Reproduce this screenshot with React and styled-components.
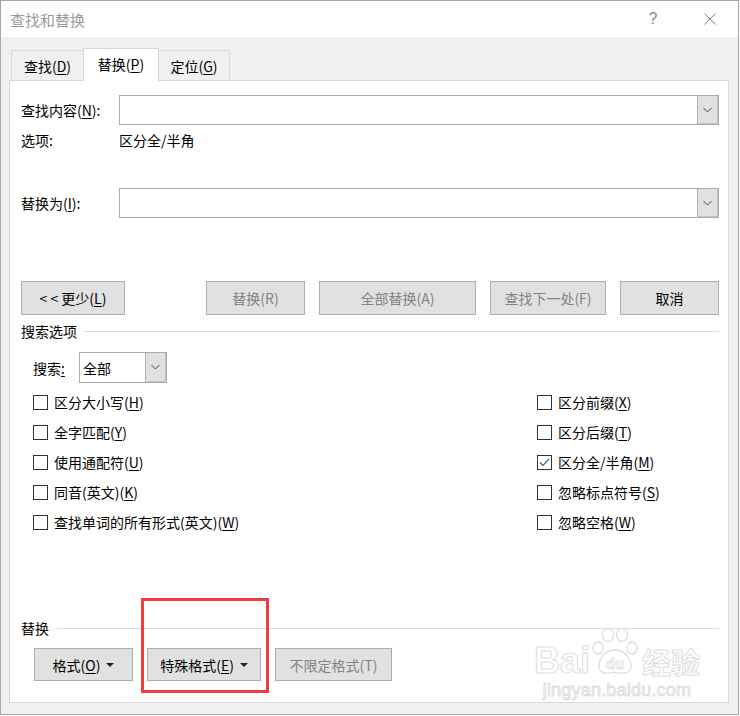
import React from "react";
import styled, { createGlobalStyle } from "styled-components";

const GlobalStyle = createGlobalStyle`
  html, body {
    margin: 0;
    padding: 0;
    background: #ffffff;
  }
  body {
    font-family: "Noto Sans CJK SC", "Noto Sans", sans-serif;
    font-size: 14px;
    color: #000;
  }
`;

const Window = styled.div`
  position: relative;
  width: 739px;
  height: 715px;
  box-sizing: border-box;
  border: 1px solid #a6a6a6;
  background: #f0f0f0;
  display: flex;
  flex-direction: column;
  overflow: hidden;
`;

const TitleBar = styled.div`
  height: 36px;
  flex-shrink: 0;
  background: #ffffff;
  display: flex;
  align-items: center;
  padding-left: 9px;
  font-size: 15px;
  color: #9a9a9a;
`;

const TitleText = styled.div`
  flex: 1;
  line-height: 20px;
  padding-top: 1px;
`;

const TitleControl = styled.div`
  width: ${(p) => p.w}px;
  margin-left: ${(p) => p.ml || 0}px;
  display: flex;
  align-items: center;
  justify-content: center;
  color: #8a8a8a;
  font-size: 16px;
  font-family: "Liberation Sans", sans-serif;
  font-weight: 300;
`;

const Body = styled.div`
  flex: 1;
  display: flex;
  flex-direction: column;
  padding: 11px 9px 11px 8px;
`;

const TabRow = styled.div`
  display: flex;
  align-items: flex-end;
  height: 32px;
  margin-left: 2px;
  position: relative;
  z-index: 1;
`;

const Tab = styled.div`
  width: ${(p) => p.w}px;
  height: ${(p) => (p.active ? 33 : 30)}px;
  margin-bottom: ${(p) => (p.active ? -1 : 0)}px;
  margin-left: -1px;
  box-sizing: border-box;
  border: 1px solid #d9d9d9;
  border-bottom: none;
  background: ${(p) => (p.active ? "#ffffff" : "#f0f0f0")};
  display: flex;
  align-items: center;
  justify-content: center;
  padding-bottom: ${(p) => (p.active ? 2 : 0)}px;
  font-size: 14px;
  line-height: 18px;
  &:first-child {
    margin-left: 0;
  }
`;

const Panel = styled.div`
  flex: 1;
  background: #ffffff;
  border: 1px solid #d9d9d9;
  padding: 0 9px 0 11px;
  display: flex;
  flex-direction: column;
`;

const FieldRow = styled.div`
  display: flex;
  align-items: center;
  margin-top: ${(p) => p.mt}px;
  height: ${(p) => p.h || 30}px;
`;

const FieldLabel = styled.div`
  width: 98px;
  flex-shrink: 0;
  line-height: 18px;
`;

const OptionValue = styled.div`
  line-height: 18px;
`;

const Combo = styled.div`
  flex: 1;
  height: 30px;
  box-sizing: border-box;
  border: 1px solid #ababab;
  background: #fff;
  display: flex;
  justify-content: flex-end;
`;

const DropButton = styled.div`
  width: 21px;
  box-sizing: border-box;
  background: #e1e1e1;
  border-left: 1px solid #adadad;
  border-right: 1px solid #c4c4c4;
  border-bottom: 1px solid #c4c4c4;
  display: flex;
  align-items: center;
  justify-content: center;
`;

const ButtonRow = styled.div`
  display: flex;
  align-items: center;
  gap: 14px;
  margin-top: ${(p) => p.mt}px;
  padding-left: ${(p) => p.pl || 0}px;
`;

const Spacer = styled.div`
  flex: 1;
`;

const Button = styled.div`
  position: relative;
  width: ${(p) => p.w}px;
  height: ${(p) => p.h || 34}px;
  box-sizing: border-box;
  border: 1px solid #adadad;
  background: #e1e1e1;
  color: ${(p) => (p.disabled ? "#838383" : "#000")};
  display: flex;
  align-items: center;
  justify-content: center;
  gap: 6px;
  font-size: 14px;
  line-height: 18px;
  white-space: pre;
`;

const Caret = styled.span`
  width: 0;
  height: 0;
  border-left: 4px solid transparent;
  border-right: 4px solid transparent;
  border-top: 4px solid #222;
  margin-top: 1px;
`;

const Key = styled.u`
  text-underline-offset: 2px;
  text-decoration-thickness: 1px;
`;

const SectionHeader = styled.div`
  display: flex;
  align-items: center;
  gap: 8px;
  height: 18px;
  margin-top: ${(p) => p.mt}px;
  line-height: 18px;
`;

const Rule = styled.div`
  flex: 1;
  height: 1px;
  background: #dcdcdc;
  margin-top: 1px;
`;

const SearchRow = styled.div`
  display: flex;
  align-items: center;
  margin-top: 12px;
  padding-left: 12px;
`;

const SearchLabel = styled.div`
  width: 46px;
  line-height: 18px;
`;

const Select = styled.div`
  width: 88px;
  height: 31px;
  box-sizing: border-box;
  border: 1px solid #ababab;
  display: flex;
  background: #fff;
`;

const SelectValue = styled.div`
  flex: 1;
  display: flex;
  align-items: center;
  padding-left: 3px;
  line-height: 18px;
`;

const CheckGrid = styled.div`
  display: grid;
  grid-template-columns: 504px 1fr;
  grid-template-rows: repeat(5, 30px);
  grid-auto-flow: column;
  margin-top: 4px;
  padding-left: 12px;
`;

const CheckItem = styled.div`
  display: flex;
  align-items: center;
  gap: 6px;
  line-height: 18px;
`;

const Box = styled.div`
  width: 15px;
  height: 15px;
  box-sizing: border-box;
  border: 1px solid #333;
  background: #fff;
  display: flex;
  align-items: center;
  justify-content: center;
`;

const Highlight = styled.div`
  position: absolute;
  left: -7px;
  right: -9px;
  top: -51px;
  bottom: -13px;
  border: 3px solid #f23b3d;
  pointer-events: none;
`;

const Watermark = styled.div`
  position: absolute;
  right: 38px;
  bottom: 15px;
  display: flex;
  flex-direction: column;
  align-items: center;
  color: #ffffff;
  font-family: "Liberation Sans", "Noto Sans CJK SC", sans-serif;
  -webkit-text-stroke: 1px #dedede;
`;

const MarkTop = styled.div`
  display: flex;
  align-items: flex-end;
  font-size: 36px;
  line-height: 32px;
  font-weight: 700;
`;

const MarkCn = styled.span`
  font-family: "Noto Sans CJK SC", sans-serif;
  font-size: 29px;
  line-height: 32px;
  font-weight: 700;
  margin-left: 2px;
`;

const MarkUrl = styled.div`
  font-size: 18px;
  line-height: 18px;
  margin-top: 4px;
  letter-spacing: 0.2px;
`;

const Chevron = () => (
  <svg width="9" height="6" viewBox="0 0 9 6">
    <polyline points="0.5,1 4.5,5 8.5,1" fill="none" stroke="#444" strokeWidth="1" />
  </svg>
);

const Paw = () => (
  <svg width="50" height="50" viewBox="0 0 50 50">
    <g fill="#fff" stroke="#dedede" strokeWidth="1.3">
      <ellipse cx="8" cy="21" rx="5" ry="6" />
      <ellipse cx="18" cy="8" rx="5.5" ry="6.5" />
      <ellipse cx="32" cy="8" rx="5.5" ry="6.5" />
      <ellipse cx="42" cy="21" rx="5" ry="6" />
      <path d="M9 40 C9 28 18 23 25 23 C32 23 41 28 41 40 C41 47 32 47 25 45 C18 47 9 47 9 40 Z" />
    </g>
    <text x="25" y="42" textAnchor="middle" fontSize="15" fontWeight="700" fontFamily="Liberation Sans, sans-serif" fill="#fff" stroke="#dedede" strokeWidth="0.9">du</text>
  </svg>
);

const leftChecks = [
  ["区分大小写(", "H", ")"],
  ["全字匹配(", "Y", ")"],
  ["使用通配符(", "U", ")"],
  ["同音(英文)(", "K", ")"],
  ["查找单词的所有形式(英文)(", "W", ")"],
];

const rightChecks = [
  ["区分前缀(", "X", ")", false],
  ["区分后缀(", "T", ")", false],
  ["区分全/半角(", "M", ")", true],
  ["忽略标点符号(", "S", ")", false],
  ["忽略空格(", "W", ")", false],
];

const Check = ({ label, checked }) => (
  <CheckItem>
    <Box>
      {checked && (
        <svg width="11" height="9" viewBox="0 0 11 9">
          <polyline points="1,4.5 4,7.5 10,1" fill="none" stroke="#5a5a5a" strokeWidth="1.2" />
        </svg>
      )}
    </Box>
    <span>
      {label[0]}
      <Key>{label[1]}</Key>
      {label[2]}
    </span>
  </CheckItem>
);

export default function App() {
  return (
    <>
      <GlobalStyle />
      <Window>
        <TitleBar>
          <TitleText>查找和替换</TitleText>
          <TitleControl w={20}>?</TitleControl>
          <TitleControl w={56} ml={19}>
            <svg width="12" height="12" viewBox="0 0 12 12">
              <path d="M0.5 0.5 L11.5 11.5 M11.5 0.5 L0.5 11.5" stroke="#7a7a7a" strokeWidth="1" />
            </svg>
          </TitleControl>
        </TitleBar>
        <Body>
          <TabRow>
            <Tab w={73}>
              查找(<Key>D</Key>)
            </Tab>
            <Tab w={76} active>
              替换(<Key>P</Key>)
            </Tab>
            <Tab w={72}>
              定位(<Key>G</Key>)
            </Tab>
          </TabRow>
          <Panel>
            <FieldRow mt={14}>
              <FieldLabel>
                查找内容(<Key>N</Key>):
              </FieldLabel>
              <Combo>
                <DropButton>
                  <Chevron />
                </DropButton>
              </Combo>
            </FieldRow>
            <FieldRow mt={5} h={20}>
              <FieldLabel>选项:</FieldLabel>
              <OptionValue>区分全/半角</OptionValue>
            </FieldRow>
            <FieldRow mt={38}>
              <FieldLabel>
                替换为(<Key>I</Key>):
              </FieldLabel>
              <Combo>
                <DropButton>
                  <Chevron />
                </DropButton>
              </Combo>
            </FieldRow>

            <ButtonRow mt={63}>
              <Button w={104}>
                <span>
                  {"< < 更少("}
                  <Key>L</Key>)
                </span>
              </Button>
              <Spacer />
              <Button w={99} disabled>
                替换(R)
              </Button>
              <Button w={157} disabled>
                全部替换(A)
              </Button>
              <Button w={116} disabled>
                查找下一处(F)
              </Button>
              <Button w={99}>取消</Button>
            </ButtonRow>

            <SectionHeader mt={7}>
              <span>搜索选项</span>
              <Rule />
            </SectionHeader>

            <SearchRow>
              <SearchLabel>
                搜索<Key>:</Key>
              </SearchLabel>
              <Select>
                <SelectValue>全部</SelectValue>
                <DropButton>
                  <Chevron />
                </DropButton>
              </Select>
            </SearchRow>

            <CheckGrid>
              {leftChecks.map((c) => (
                <Check key={c[0]} label={c} />
              ))}
              {rightChecks.map((c) => (
                <Check key={c[0]} label={c} checked={c[3]} />
              ))}
            </CheckGrid>

            <SectionHeader mt={82}>
              <span>替换</span>
              <Rule />
            </SectionHeader>

            <ButtonRow mt={11} pl={13}>
              <Button w={99} h={33}>
                <span>
                  格式(<Key>O</Key>)
                </span>
                <Caret />
              </Button>
              <Button w={114} h={33}>
                <span>
                  特殊格式(<Key>E</Key>)
                </span>
                <Caret />
                <Highlight />
              </Button>
              <Button w={117} h={33} disabled>
                不限定格式(T)
              </Button>
            </ButtonRow>
          </Panel>
        </Body>
        <Watermark>
          <MarkTop>
            <span>Bai</span>
            <Paw />
            <MarkCn>经验</MarkCn>
          </MarkTop>
          <MarkUrl>jingyan.baidu.com</MarkUrl>
        </Watermark>
      </Window>
    </>
  );
}
